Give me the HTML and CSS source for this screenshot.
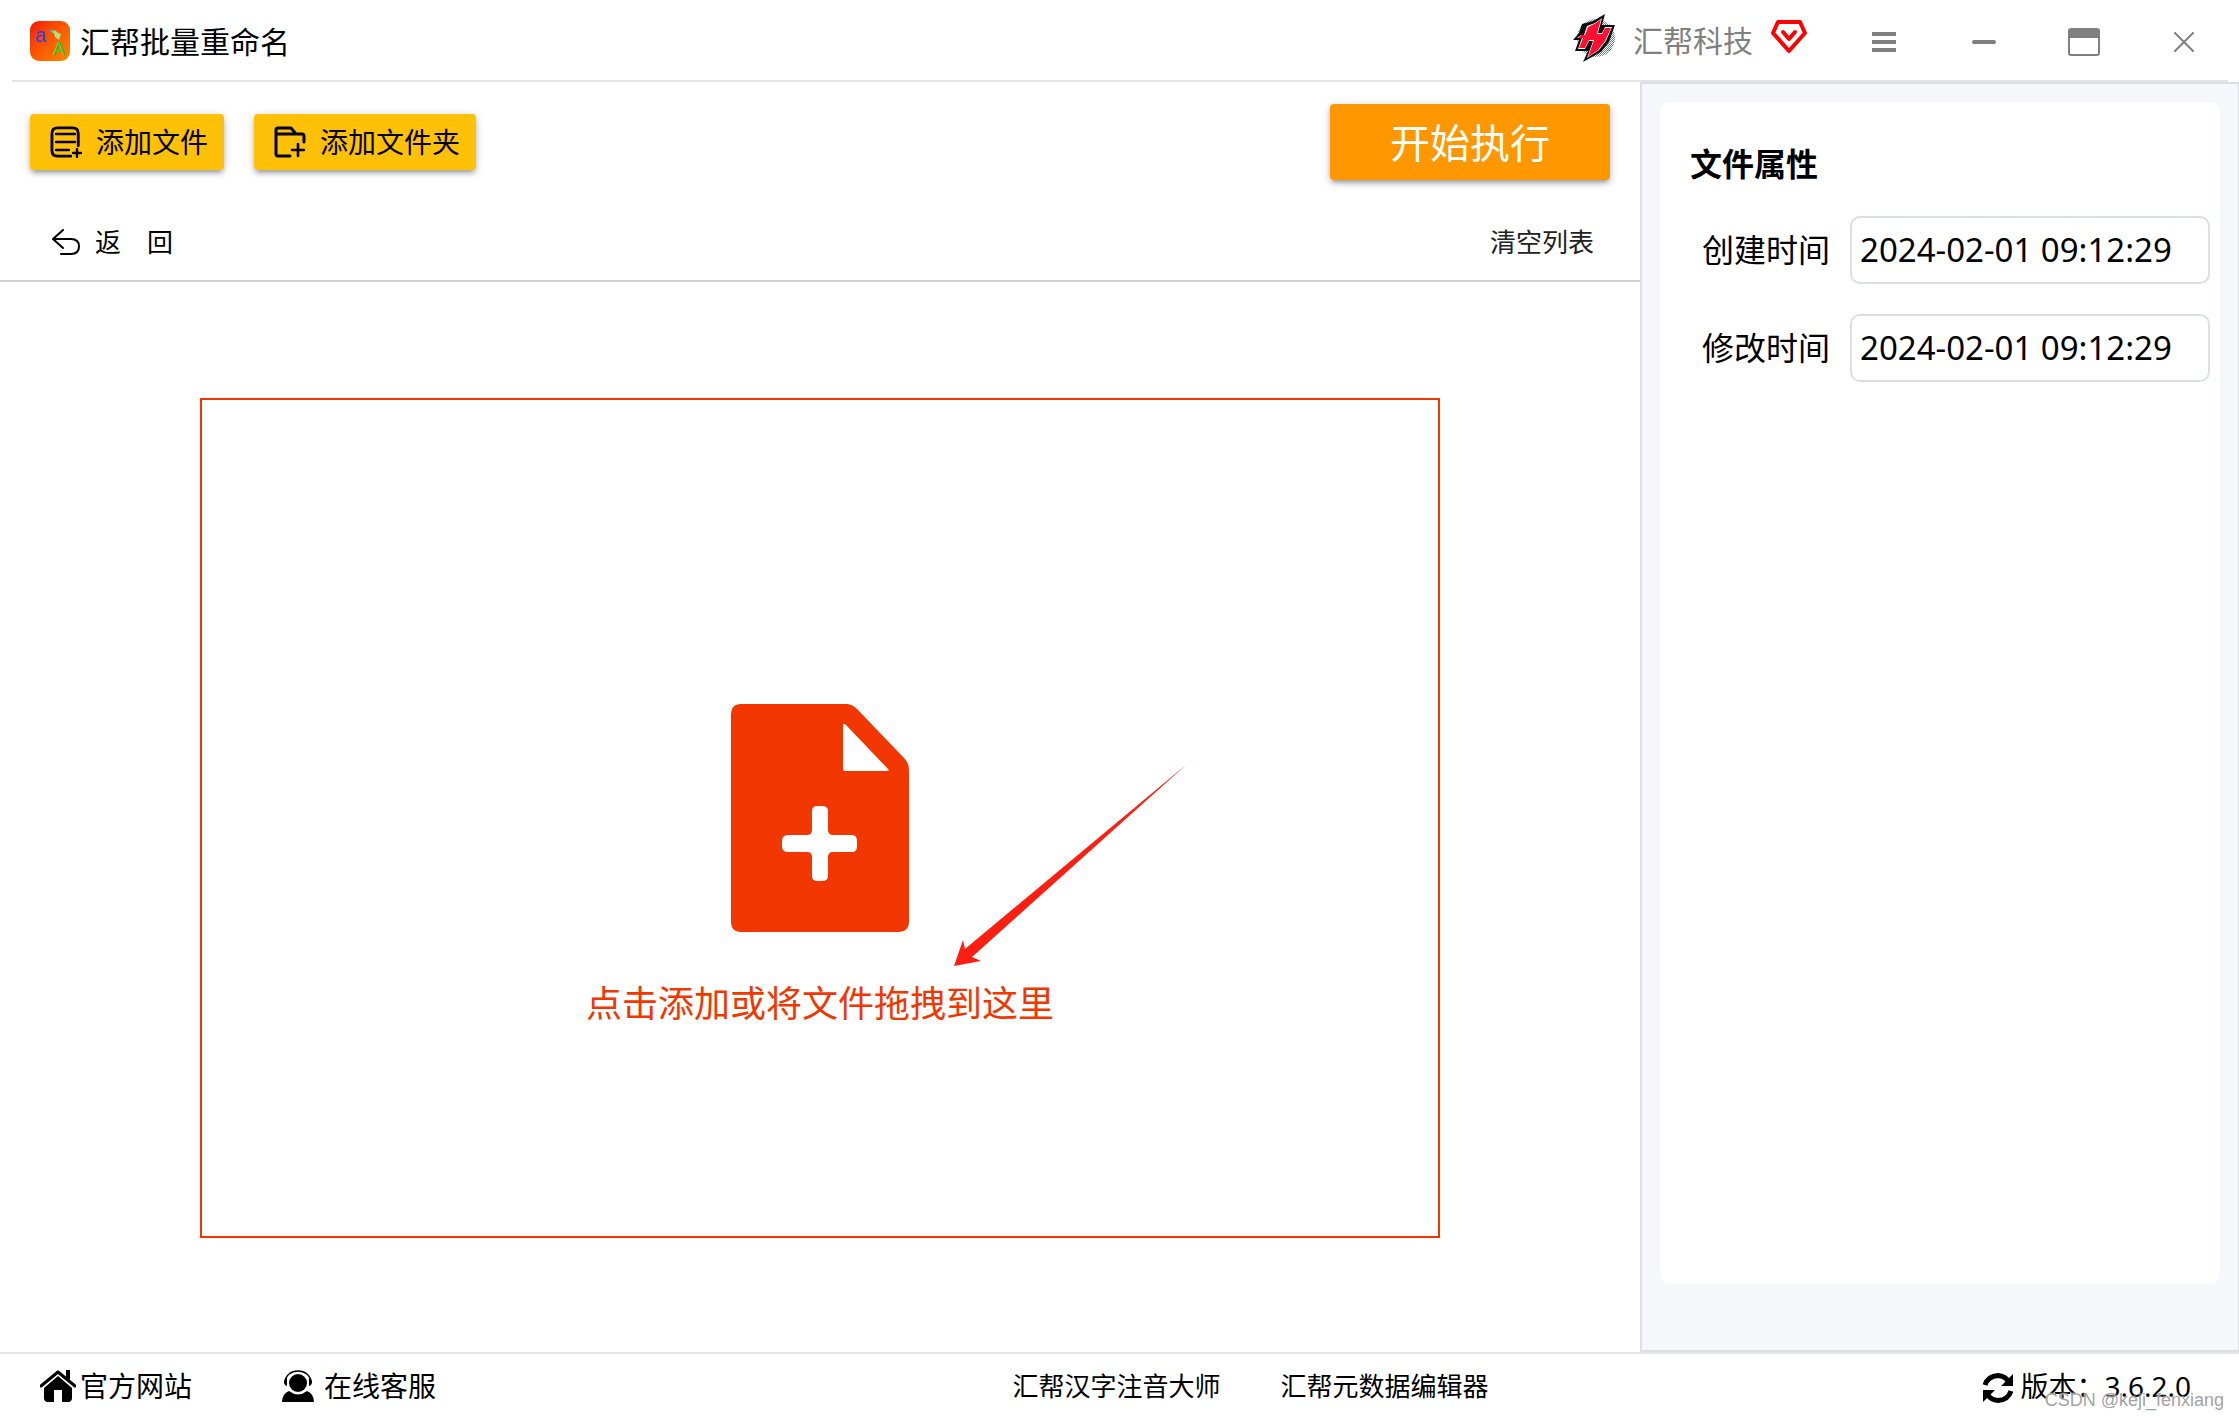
FILE: index.html
```html
<!DOCTYPE html>
<html lang="zh-CN">
<head>
<meta charset="utf-8">
<meta name="viewport" content="width=device-width, initial-scale=1">
<title>汇帮批量重命名</title>
<link rel="stylesheet" href="styles.css">
</head>
<body>
<header class="titlebar">
  <div class="app">
    <svg class="app-icon" viewBox="0 0 40 40" aria-hidden="true">
      <defs>
        <linearGradient id="tile" x1="0" y1="0" x2="1" y2="1"><stop offset="0" stop-color="#f01800"/><stop offset=".35" stop-color="#fa4a00"/><stop offset="1" stop-color="#ff8a00"/></linearGradient>
        <linearGradient id="swoop" x1="0" y1="0" x2="1" y2="0"><stop offset="0" stop-color="#2f6fe0"/><stop offset=".6" stop-color="#a8e878"/></linearGradient>
      </defs>
      <rect width="40" height="40" rx="9" fill="url(#tile)"/>
      <text x="5" y="21" class="glyph-small">a</text>
      <text x="23" y="34" class="glyph-large">A</text>
      <path d="M17 12C20 8 25 8 28 12L31 13L29 19L24 15L25 14C23 11 20 10 17 12Z" fill="url(#swoop)"/>
    </svg>
    <h1 class="app-name">汇帮批量重命名</h1>
  </div>
  <div class="account">
    <svg class="brand-logo" viewBox="0 0 42 48" aria-hidden="true">
      <defs><pattern id="dots" width="2" height="2" patternUnits="userSpaceOnUse"><rect width="2" height="2" fill="#fff"/><rect width="1" height="1" fill="#6f8a83"/><rect x="1" y="1" width="1" height="1" fill="#6f8a83"/></pattern></defs>
      <circle cx="23" cy="24" r="19" fill="url(#dots)"/>
      <path d="M32 0L29 11H42L36 28L28 38L10 48L15 37H2L6 26H0L6 19L9 10L20 7Z" fill="#0a1012"/>
      <path d="M29 4L25 19H29L32 13H39L33 27L26 36L14 44L20 27H16L12 35H5L9 24H4L8 21H11L14 12L22 9Z" fill="#fff"/>
      <path d="M28 5L24 20H29L32 14H38L32 27L25 36L15 43L21 26H16L12 34H6L10 24H5L8 21H12L15 13L23 9Z" fill="#ff1030"/>
    </svg>
    <span class="brand-name">汇帮科技</span>
    <svg class="vip" viewBox="0 0 36 34" aria-hidden="true"><path d="M7 2H29L34 13L18 31L2 13Z" fill="none" stroke="#ff0000" stroke-width="4" stroke-linejoin="round"/><path d="M12 12L18 19L24 12" fill="none" stroke="#ff0000" stroke-width="4" stroke-linecap="round" stroke-linejoin="round"/></svg>
  </div>
  <nav class="window-controls" aria-label="窗口">
    <button type="button" aria-label="菜单"><svg width="24" height="20" viewBox="0 0 24 20"><path d="M0 0H24V4H0ZM0 8H24V12H0ZM0 16H24V20H0Z" fill="#808080"/></svg></button>
    <button type="button" aria-label="最小化"><svg width="24" height="4" viewBox="0 0 24 4"><rect width="24" height="4" rx="2" fill="#808080"/></svg></button>
    <button type="button" aria-label="最大化"><svg width="32" height="28" viewBox="0 0 32 28"><rect x="1" y="1" width="30" height="26" rx="2" fill="none" stroke="#808080" stroke-width="2"/><path d="M1 2H31V10H1Z" fill="#808080"/></svg></button>
    <button type="button" aria-label="关闭"><svg width="20" height="20" viewBox="0 0 20 20"><path d="M1 1L19 19M19 1L1 19" stroke="#808080" stroke-width="2" stroke-linecap="round"/></svg></button>
  </nav>
</header>

<div class="workspace">
  <main class="files">
    <div class="toolbar">
      <button type="button" class="btn btn-add">
        <svg width="32" height="32" viewBox="0 0 32 32" fill="none" stroke="#000" stroke-linecap="round"><path d="M21 31H7Q1 31 1 25V7Q1 1 7 1H23Q29 1 29 7V20" stroke-width="3" transform="translate(1 1) scale(.94)"/><path d="M6 8H25M6 16H25M6 24H19M27 23V31M23 27H31" stroke-width="2.4"/></svg>
        添加文件
      </button>
      <button type="button" class="btn btn-add">
        <svg width="32" height="32" viewBox="0 0 32 32" fill="none" stroke="#000" stroke-width="3" stroke-linecap="round" stroke-linejoin="round"><path d="M16 30H4Q2 30 2 28V4Q2 2 4 2H17L22 8H28Q30 8 30 10V16M3 8H22"/><path d="M24 18V30M18 24H30" stroke-width="2.6"/></svg>
        添加文件夹
      </button>
      <button type="button" class="btn btn-run">开始执行</button>
    </div>
    <div class="listbar">
      <button type="button" class="link-btn back">
        <svg width="28" height="26" viewBox="0 0 28 26" fill="none" stroke="#000" stroke-width="2" stroke-linecap="round" stroke-linejoin="round"><path d="M11 1L1 10L11 19M1 10H19Q27 10 27 17.500Q27 25 19 25H9"/></svg>
        返　回
      </button>
      <button type="button" class="link-btn clear">清空列表</button>
    </div>
    <div class="drop-area">
      <button type="button" class="dropzone">
        <svg width="180" height="228" viewBox="0 0 180 228" aria-hidden="true">
          <path fill="#f23600" fill-rule="evenodd" d="M11 0H116Q122 0 127 5L174 54Q179 59 179 66V217Q179 228 168 228H11Q1 228 1 217V11Q1 0 11 0ZM113 22V65Q113 67 115 67H157Q160 67 158 65L116 21Q113 18 113 22ZM87 102Q82 102 82 107V126Q82 131 77 131H58Q52 131 52 137V142Q52 148 58 148H77Q82 148 82 153V172Q82 177 87 177H92Q98 177 98 172V153Q98 148 103 148H122Q127 148 127 142V137Q127 131 122 131H103Q98 131 98 126V107Q98 102 92 102Z"/>
        </svg>
        <span>点击添加或将文件拖拽到这里</span>
      </button>
      <svg class="pointer" viewBox="0 0 260 230" aria-hidden="true"><path fill="#ff1f12" d="M14 216L23 190L25 199L247 14L32 207L41 211Z"/></svg>
    </div>
  </main>

  <aside class="side">
    <section class="card">
      <h2 class="card-title">文件属性</h2>
      <form class="props">
        <label for="created">创建时间</label>
        <input id="created" type="text" value="2024-02-01 09:12:29">
        <label for="modified">修改时间</label>
        <input id="modified" type="text" value="2024-02-01 09:12:29">
      </form>
    </section>
  </aside>
</div>

<footer class="statusbar">
  <div class="status-left">
    <a href="#site"><svg width="36" height="32" viewBox="0 0 36 32" aria-hidden="true"><path d="M1 16L18 2L35 16" fill="none" stroke="#000" stroke-width="3" stroke-linecap="round" stroke-linejoin="round"/><path d="M26 0H30V10L26 7Z"/><path d="M4 18L18 6L32 18V28Q32 32 28 32H22V20H14V32H8Q4 32 4 28Z"/></svg>官方网站</a>
    <a href="#support" class="support"><svg width="32" height="32" viewBox="0 0 32 32" aria-hidden="true"><circle cx="16" cy="13" r="9"/><path d="M3 13C3 -3 29 -3 29 13" fill="none" stroke="#000" stroke-width="1.500"/><path d="M5 8V16Q2 15 2 12Q2 9 5 8ZM27 8V16Q30 15 30 12Q30 9 27 8Z"/><path d="M0 32Q0 24 7 21Q16 28 25 21Q32 24 32 32Z"/></svg>在线客服</a>
  </div>
  <div class="status-links">
    <a href="#pinyin">汇帮汉字注音大师</a>
    <a href="#metadata">汇帮元数据编辑器</a>
  </div>
  <div class="version">
    <svg width="32" height="32" viewBox="0 0 32 32" aria-hidden="true"><path d="M3 13Q6 4 16 3.500Q23 4 26 9M29 19Q26 28 16 28.500Q9 28 6 23" fill="none" stroke="#000" stroke-width="5"/><path d="M31 2V14H19ZM1 30V18H13Z"/></svg>
    <span>版本：3.6.2.0</span>
  </div>
  <span class="watermark">CSDN @keji_fenxiang</span>
</footer>
</body>
</html>
```
FILE: styles.css
```css
* { box-sizing: border-box; }

body {
  margin: 0;
  min-height: 100vh;
  display: flex;
  flex-direction: column;
  background: #fff;
  color: #000;
  font-family: "Noto Sans", "Noto Sans CJK SC", sans-serif;
  font-size: 28px;
  line-height: 40px;
}

svg { display: block; flex: none; }
button { font: inherit; color: inherit; border: 0; background: none; padding: 0; cursor: pointer; }
a { color: inherit; text-decoration: none; }
h1, h2 { margin: 0; }

/* title bar */
.titlebar {
  display: flex;
  align-items: center;
  height: 82px;
  margin: 0 11px 0 12px;
  padding-left: 18px;
  border-bottom: 2px solid #e4e4e4;
}
.app { display: flex; align-items: center; gap: 10px; margin-right: auto; padding-top: 4px; }
.app-icon { width: 40px; height: 40px; }
.app-name { font-size: 30px; font-weight: 400; }
.glyph-small { font: 20px "Liberation Sans", sans-serif; fill: #2f3fe0; }
.glyph-large { font: 18px "Liberation Sans", sans-serif; fill: #10e040; }
.account { display: flex; align-items: center; margin-right: 33px; }
.brand-logo { width: 42px; height: 48px; margin-right: 18px; margin-bottom: 4px; }
.brand-name { font-size: 30px; color: #808080; margin-right: 18px; padding-top: 2px; }
.vip { width: 36px; height: 34px; margin-bottom: 6px; }
.app-icon { margin-bottom: 2px; }
.window-controls { display: flex; gap: 12px; padding-top: 4px; }
.window-controls button { width: 88px; height: 60px; display: grid; place-items: center; }

/* main area */
.workspace { flex: 1; display: grid; grid-template-columns: minmax(0, 1fr) 599px; }
.files { display: flex; flex-direction: column; }

.toolbar { display: flex; align-items: center; gap: 30px; padding: 22px 30px 0; }
.btn {
  border-radius: 4px;
  box-shadow: 0 2px 10px rgba(0, 0, 0, .2), 0 4px 4px rgba(0, 0, 0, .14), 0 6px 2px -4px rgba(0, 0, 0, .12);
}
.btn-add { display: flex; align-items: center; gap: 14px; height: 56px; padding: 0 16px 0 20px; background: #ffc107; }
.btn-run { width: 280px; height: 76px; margin-left: auto; padding-top: 2px; background: #ff9800; color: #fff; font-size: 40px; }

.listbar {
  display: flex;
  align-items: center;
  justify-content: space-between;
  height: 76px;
  margin-top: 26px;
  padding: 0 46px 2px 52px;
  border-bottom: 2px solid #d0d0d0;
}
.link-btn { font-size: 26px; }
.back { display: flex; align-items: center; gap: 15px; }
.clear { color: #222; }

.drop-area { position: relative; flex: 1; display: flex; padding: 116px 200px 114px; }
.dropzone {
  flex: 1;
  display: flex;
  flex-direction: column;
  align-items: center;
  gap: 45px;
  padding-top: 304px;
  border: 2px solid #f23600;
  color: #f23600;
  font-size: 36px;
  line-height: 54px;
}
.pointer { position: absolute; left: calc(50% + 120px); top: 468px; width: 260px; height: 230px; pointer-events: none; }

/* properties panel */
.side { display: flex; padding: 18px 18px 66px 18px; border: 2px solid #dcdfe6; border-right-width: 1px; background: #f5f7fa; }
.card { flex: 1; padding: 38px 10px 38px 30px; border-radius: 10px; background: #fff; }
.card-title { font-size: 32px; line-height: 48px; font-weight: 700; }
.props {
  display: grid;
  grid-template-columns: auto minmax(0, 1fr);
  align-items: center;
  gap: 30px 20px;
  margin-top: 28px;
  padding-left: 12px;
  font-size: 32px;
}
.props input {
  width: 100%;
  height: 68px;
  padding: 0 8px 2px;
  border: 2px solid #dcdfe6;
  border-radius: 10px;
  background: #fff;
  color: #000;
  font-family: inherit;
  font-size: 33px;
}

/* status bar */
.statusbar {
  position: relative;
  display: grid;
  grid-template-columns: auto 7fr auto 6fr auto;
  align-items: center;
  height: 67px;
  padding: 0 48px 2px 40px;
  border-top: 2px solid #e4e4e4;
}
.status-left { display: flex; gap: 90px; }
.status-left a { display: flex; align-items: center; gap: 4px; }
.status-left .support { gap: 10px; }
.status-links { grid-column: 3; display: flex; gap: 60px; font-size: 26px; }
.version { grid-column: 5; display: flex; align-items: center; gap: 6px; }
.version svg { margin-top: 4px; }
.watermark {
  position: absolute;
  right: 15px;
  bottom: 7px;
  font: 18px/24px "Liberation Sans", sans-serif;
  color: rgba(150, 150, 150, .9);
  text-shadow: 0 0 2px #fff;
}
```
